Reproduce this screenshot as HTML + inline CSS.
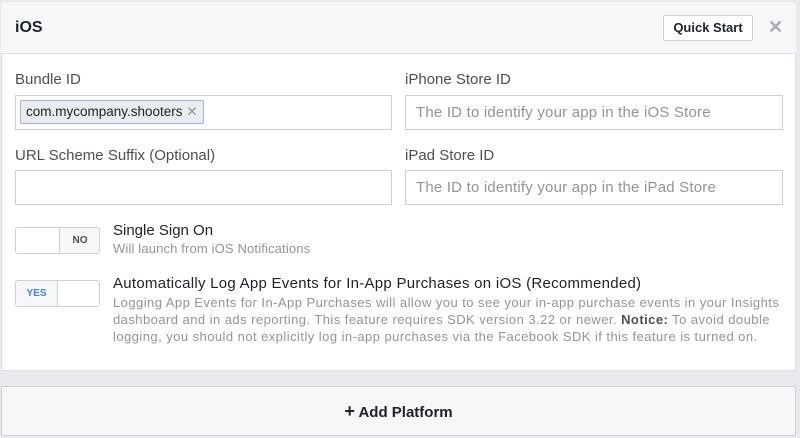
<!DOCTYPE html>
<html><head><style>
body{margin:0;width:800px;height:438px;background:#e9eaed;font-family:"Liberation Sans",sans-serif;position:relative;overflow:hidden}
.a{position:absolute}
.panel{left:1px;top:2px;width:795px;height:369px;background:#fff;border:1px solid #dddfe2;border-radius:3px;box-sizing:border-box}
.hdr{left:1px;top:2px;width:795px;height:52px;background:#f6f7f9;border-bottom:1px solid #dddfe2;box-sizing:border-box;border-radius:3px 3px 0 0}
.lbl{font-size:15px;color:#4b4f56}
.inp{height:35px;border:1px solid #ccd0d5;box-sizing:border-box;background:#fff;font-size:15px;color:#90949c;padding:8px 10px;letter-spacing:0.2px}
.tg{width:85px;height:27px;border:1px solid #ccd0d5;border-radius:3px;box-sizing:border-box;background:#f6f7f9;font-size:10px;font-weight:bold;overflow:hidden}
</style></head><body>
<div class="a panel"></div>
<div class="a hdr"></div>
<div class="a" style="left:15px;top:19px;font-size:16px;font-weight:bold;color:#1d2129">iOS</div>
<div class="a" style="left:663px;top:15px;width:90px;height:26px;border:1px solid #ccd0d5;border-radius:2px;background:#fff;box-sizing:border-box;font-size:13px;font-weight:bold;color:#1d2129;text-align:center;line-height:24px">Quick Start</div>
<div class="a" style="left:768px;top:17px;font-size:18px;color:#a8abb1;font-weight:bold">✕</div>
<div class="a lbl" style="left:15px;top:71px">Bundle ID</div>
<div class="a lbl" style="left:405px;top:71px">iPhone Store ID</div>
<div class="a inp" style="left:15px;top:95px;width:377px"></div>
<div class="a" style="left:20px;top:100px;height:24px;padding:0 5px;border:1px solid #9cb4d8;border-radius:2px;background:#e9ebee;box-sizing:border-box;font-size:13.5px;color:#1d2129;line-height:22px">com.mycompany.shooters <span style="color:#90949c">✕</span></div>
<div class="a inp" style="left:405px;top:95px;width:378px">The ID to identify your app in the iOS Store</div>
<div class="a lbl" style="left:15px;top:147px">URL Scheme Suffix (Optional)</div>
<div class="a lbl" style="left:405px;top:147px">iPad Store ID</div>
<div class="a inp" style="left:15px;top:170px;width:377px"></div>
<div class="a inp" style="left:405px;top:170px;width:378px">The ID to identify your app in the iPad Store</div>
<div class="a tg" style="left:15px;top:227px"><div class="a" style="left:0;top:0;width:43px;height:25px;background:#fff;border-right:1px solid #ccd0d5"></div><div class="a" style="left:44px;top:0;width:40px;line-height:25px;text-align:center;color:#4b4f56">NO</div></div>
<div class="a" style="left:113px;top:222px;font-size:15px;color:#1d2129">Single Sign On</div>
<div class="a" style="left:113px;top:241px;font-size:13px;color:#90949c;letter-spacing:0.15px">Will launch from iOS Notifications</div>
<div class="a tg" style="left:15px;top:280px"><div class="a" style="left:0;top:0;width:41px;line-height:25px;text-align:center;color:#4080ff">YES</div><div class="a" style="left:41px;top:0;width:42px;height:25px;background:#fff;border-left:1px solid #ccd0d5"></div></div>
<div class="a" style="left:113px;top:275px;font-size:15px;color:#1d2129;letter-spacing:0.27px">Automatically Log App Events for In-App Purchases on iOS (Recommended)</div>
<div class="a" style="left:113px;top:294px;width:675px;font-size:13px;line-height:17px;color:#90949c;letter-spacing:0.45px">Logging App Events for In-App Purchases will allow you to see your in-app purchase events in your Insights dashboard and in ads reporting. This feature requires SDK version 3.22 or newer. <b style="color:#4b4f56">Notice:</b> To avoid double logging, you should not explicitly log in-app purchases via the Facebook SDK if this feature is turned on.</div>
<div class="a" style="left:1px;top:386px;width:795px;height:50px;background:#f6f7f9;border:1px solid #ccd0d5;border-radius:2px;box-sizing:border-box;text-align:center;line-height:48px;font-size:15px;font-weight:bold;color:#1d2129"><span style="font-size:18px">+</span> Add Platform</div>
</body></html>
